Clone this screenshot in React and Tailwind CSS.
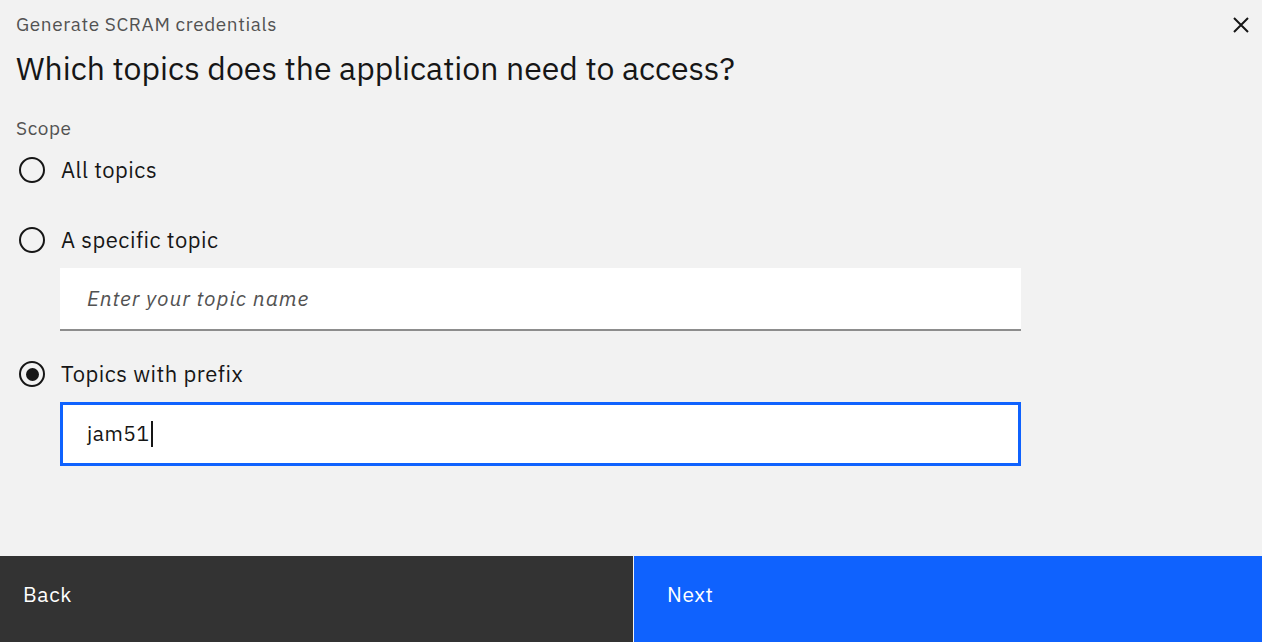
import React from 'react';

const font = { fontFamily: '"IBM Plex Sans", "Noto Sans", sans-serif' };

const Radio = ({ checked }) => (
  <span className="w-[26px] h-[26px] rounded-full border-2 border-[#161616] flex items-center justify-center shrink-0">
    {checked && <span className="w-[13px] h-[13px] rounded-full bg-[#161616]" />}
  </span>
);

const Option = ({ label, checked, className }) => (
  <label className={`flex items-center gap-[16px] pl-[19px] h-[30px] ${className}`}>
    <Radio checked={checked} />
    <span className="text-[22px] text-[#161616] tracking-[0.5px] mb-[2px]">{label}</span>
  </label>
);

export default function App() {
  return (
    <div style={font} className="w-[1262px] h-[642px] bg-[#f2f2f2] flex flex-col overflow-hidden">
      <div className="relative flex-1">
        <button className="absolute right-[12px] top-[16px] w-[18px] h-[18px] text-[#161616]">
          <svg viewBox="0 0 18 18" width="18" height="18" fill="none" stroke="currentColor" strokeWidth="2">
            <path d="M2 2L16 16M16 2L2 16" />
          </svg>
        </button>

        <p className="pl-[16px] pt-[12px] text-[19px] leading-[24px] text-[#525252] tracking-[0.6px]">
          Generate SCRAM credentials
        </p>
        <h1 className="pl-[16px] mt-[16px] text-[32px] leading-[32px] text-[#161616]">
          Which topics does the application need to access?
        </h1>

        <p className="pl-[16px] mt-[32px] text-[19px] leading-[24px] text-[#525252] tracking-[0.6px]">Scope</p>

        <Option label="All topics" className="mt-[15px]" />
        <Option label="A specific topic" className="mt-[40px]" />

        <div className="ml-[60px] w-[961px] mt-[13px] h-[63px] bg-white border-b-2 border-[#8d8d8d] flex items-center pl-[27px]">
          <span className="italic text-[21px] text-[#525252] tracking-[0.9px]">Enter your topic name</span>
        </div>

        <Option label="Topics with prefix" checked className="mt-[28px]" />

        <div className="ml-[60px] w-[961px] mt-[13px] h-[64px] bg-white border-[3px] border-[#0f62fe] flex items-center pl-[24px]">
          <span className="text-[21px] text-[#161616] tracking-[0.5px]">jam51</span>
          <span className="w-[2px] h-[26px] bg-[#161616] ml-[1px]" />
        </div>
      </div>

      <div className="h-[86px] flex gap-[1px] shrink-0">
        <button className="w-[633px] bg-[#333333] text-white text-left pl-[23px] pb-[8px] text-[21px] tracking-[0.6px]">Back</button>
        <button className="flex-1 bg-[#0f62fe] text-white text-left pl-[33px] pb-[8px] text-[21px] tracking-[0.6px]">Next</button>
      </div>
    </div>
  );
}
